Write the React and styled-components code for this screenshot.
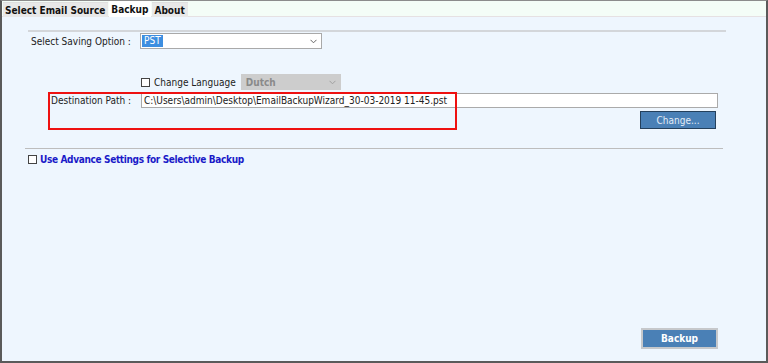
import styled, { createGlobalStyle } from "styled-components";

const GlobalStyle = createGlobalStyle`
  html, body {
    margin: 0;
    padding: 0;
    background: #ffffff;
  }
  body {
    font-family: "DejaVu Sans Condensed", "DejaVu Sans", sans-serif;
    font-stretch: condensed;
    font-size: 10px;
    color: #222;
  }
`;

const Window = styled.div`
  width: 768px;
  height: 363px;
  box-sizing: border-box;
  border-top: 1px solid #8c8c8c;
  border-left: 2px solid #5a5a5a;
  border-right: 2px solid #5a5a5a;
  border-bottom: 2px solid #5a5a5a;
  display: flex;
  flex-direction: column;
  background: #eef6fe;
`;

const TabStrip = styled.div`
  height: 16px;
  box-sizing: border-box;
  display: flex;
  align-items: flex-end;
  gap: 1px;
  padding-left: 1px;
  background: #f4fdf7;
  border-bottom: 1px solid #e6e1e3;
`;

const Tab = styled.div`
  height: ${(p) => (p.$active ? "16px" : "14px")};
  margin-bottom: -1px;
  padding: 0 3px 0 2px;
  display: flex;
  align-items: center;
  font-weight: bold;
  color: #111;
  background: ${(p) => (p.$active ? "#ffffff" : "#e8e8e8")};
  border-top: ${(p) => (p.$active ? "none" : "1px solid #e0e0e0")};
`;

const Panel = styled.div`
  flex: 1;
  display: flex;
  flex-direction: column;
  padding-top: 13px;
`;

const Section = styled.div`
  position: relative;
  margin-left: 26px;
  width: 698px;
  border-top: 2px solid #d3d6da;
  display: flex;
  flex-direction: column;
`;

const Row = styled.div`
  display: flex;
  align-items: center;
  margin-top: ${(p) => p.$gap}px;
  padding-left: ${(p) => p.$indent || 0}px;
`;

const Label = styled.span`
  box-sizing: border-box;
  width: ${(p) => p.$width}px;
  padding-left: ${(p) => p.$pad}px;
  white-space: nowrap;
  color: #222;
`;

const SelectBox = styled.div`
  box-sizing: border-box;
  width: ${(p) => p.$width}px;
  height: 16px;
  display: flex;
  align-items: center;
  justify-content: space-between;
  padding: 0 4px 0 1px;
  background: ${(p) => (p.$disabled ? "#cdcdcd" : "#ffffff")};
  border: 1px solid ${(p) => (p.$disabled ? "#cdcdcd" : "#a9a9a9")};
  color: ${(p) => (p.$disabled ? "#8a8a8a" : "#222")};
  font-weight: ${(p) => (p.$disabled ? "bold" : "normal")};
`;

const Selected = styled.span`
  background: #3d8ee0;
  color: #ffffff;
  padding: 0 2px;
  line-height: 12px;
`;

const Check = styled.span`
  box-sizing: border-box;
  width: 9px;
  height: 9px;
  border: 1px solid #444;
  background: #ffffff;
  margin-right: ${(p) => p.$space}px;
  flex-shrink: 0;
`;

const Plain = styled.span`
  margin-right: 5px;
  white-space: nowrap;
`;

const PathInput = styled.div`
  box-sizing: border-box;
  width: 577px;
  height: 15px;
  display: flex;
  align-items: center;
  padding-left: 2px;
  background: #ffffff;
  border: 1px solid #aaaaaa;
  white-space: nowrap;
  color: #222;
`;

const ActionRow = styled.div`
  display: flex;
  justify-content: flex-end;
  margin-top: 3px;
  padding-right: 10px;
`;

const BlueButton = styled.button`
  box-sizing: border-box;
  width: ${(p) => p.$width}px;
  height: ${(p) => p.$height}px;
  padding: 0;
  font-family: inherit;
  font-stretch: condensed;
  font-size: 10px;
  font-weight: ${(p) => (p.$bold ? "bold" : "normal")};
  color: ${(p) => (p.$bold ? "#ffffff" : "#e3ecf6")};
  background: #4a80b6;
  border: ${(p) => (p.$bold ? "2px solid #c6c8cb" : "1px solid #24405c")};
  cursor: pointer;
`;

const Highlight = styled.div`
  position: absolute;
  top: 60px;
  left: 20px;
  width: 409px;
  height: 38px;
  box-sizing: border-box;
  border: 2px solid #ee1111;
  pointer-events: none;
`;

const Divider = styled.div`
  margin-top: 19px;
  margin-left: 23px;
  width: 698px;
  border-top: 1px solid #bdbdbd;
`;

const AdvanceRow = styled.div`
  display: flex;
  align-items: center;
  margin-top: 6px;
  margin-left: 26px;
  height: 9px;
`;

const AdvanceText = styled.span`
  font-weight: bold;
  letter-spacing: -0.35px;
  color: #1a1ac8;
  white-space: nowrap;
`;

const Footer = styled.div`
  margin-top: auto;
  display: flex;
  justify-content: flex-end;
  padding: 0 48px 12px 0;
`;

const Chevron = ({ color }) => (
  <svg width="7" height="5" viewBox="0 0 7 5">
    <path d="M0.5 0.8 L3.5 3.8 L6.5 0.8" fill="none" stroke={color} strokeWidth="1" />
  </svg>
);

const App = () => {
  return (
    <>
      <GlobalStyle />
      <Window>
        <TabStrip>
          <Tab>Select Email Source</Tab>
          <Tab $active>Backup</Tab>
          <Tab>About</Tab>
        </TabStrip>
        <Panel>
          <Section>
            <Row $gap={1}>
              <Label $width={112} $pad={3}>Select Saving Option :</Label>
              <SelectBox $width={182}>
                <Selected>PST</Selected>
                <Chevron color="#666" />
              </SelectBox>
            </Row>
            <Row $gap={25} $indent={113}>
              <Check $space={4} />
              <Plain>Change Language</Plain>
              <SelectBox $width={100} $disabled>
                <span>&nbsp;Dutch</span>
                <Chevron color="#a0a0a0" />
              </SelectBox>
            </Row>
            <Row $gap={3}>
              <Label $width={113} $pad={23}>Destination Path :</Label>
              <PathInput>C:\Users\admin\Desktop\EmailBackupWizard_30-03-2019 11-45.pst</PathInput>
            </Row>
            <ActionRow>
              <BlueButton $width={76} $height={18}>Change...</BlueButton>
            </ActionRow>
            <Highlight />
          </Section>
          <Divider />
          <AdvanceRow>
            <Check $space={3} />
            <AdvanceText>Use Advance Settings for Selective Backup</AdvanceText>
          </AdvanceRow>
          <Footer>
            <BlueButton $width={77} $height={21} $bold>Backup</BlueButton>
          </Footer>
        </Panel>
      </Window>
    </>
  );
};

export default App;
